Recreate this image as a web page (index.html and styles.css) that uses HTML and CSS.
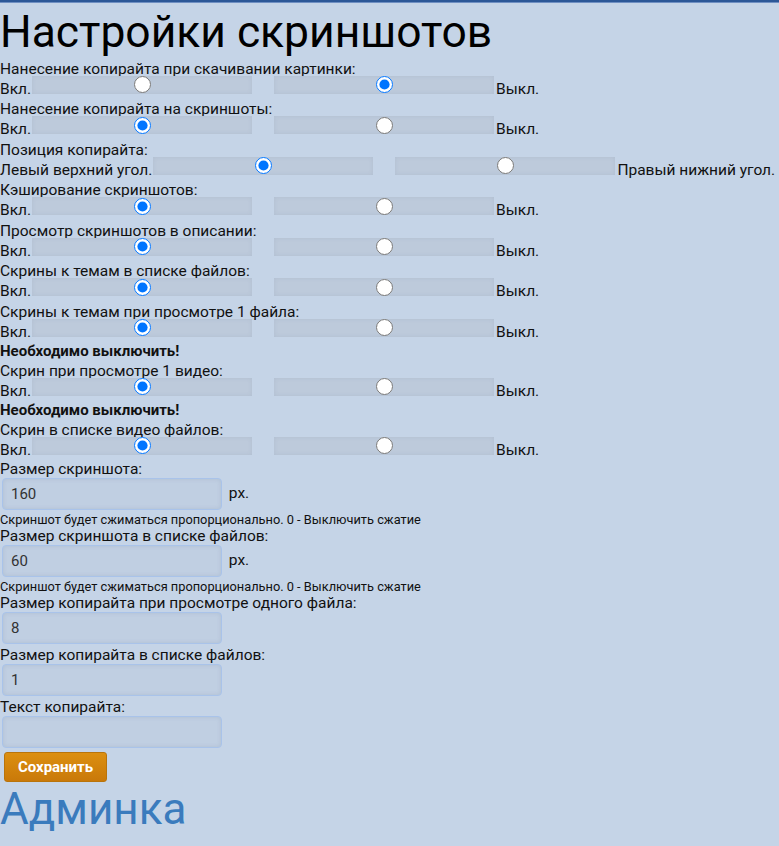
FILE: index.html
```html
<!DOCTYPE html>
<html lang="ru">
  <head>
    <meta charset="UTF-8" />
    <title>Настройки скриншотов</title>
    <link rel="stylesheet" href="styles.css">
  </head>
  <body>
    <div class="topbar"></div>
    <h1 class="page-title">Настройки скриншотов</h1>
    <form class="settings" action="" method="POST">
      <div class="field-label">Нанесение копирайта при скачивании картинки:</div>
      <div class="switch-row">
        <span class="side-label">Вкл.</span>
        <label class="radio-box"><input type="radio" name="copy_download" value="1" /></label>
        <label class="radio-box"><input type="radio" name="copy_download" value="0" checked /></label>
        <span class="side-label">Выкл.</span>
      </div>

      <div class="field-label">Нанесение копирайта на скриншоты:</div>
      <div class="switch-row">
        <span class="side-label">Вкл.</span>
        <label class="radio-box"><input type="radio" name="copy_screens" value="1" checked /></label>
        <label class="radio-box"><input type="radio" name="copy_screens" value="0" /></label>
        <span class="side-label">Выкл.</span>
      </div>

      <div class="field-label">Позиция копирайта:</div>
      <div class="switch-row">
        <span class="side-label">Левый верхний угол.</span>
        <label class="radio-box"><input type="radio" name="copy_position" value="0" checked /></label>
        <label class="radio-box"><input type="radio" name="copy_position" value="1" /></label>
        <span class="side-label">Правый нижний угол.</span>
      </div>

      <div class="field-label">Кэширование скриншотов:</div>
      <div class="switch-row">
        <span class="side-label">Вкл.</span>
        <label class="radio-box"><input type="radio" name="cache" value="1" checked /></label>
        <label class="radio-box"><input type="radio" name="cache" value="0" /></label>
        <span class="side-label">Выкл.</span>
      </div>

      <div class="field-label">Просмотр скриншотов в описании:</div>
      <div class="switch-row">
        <span class="side-label">Вкл.</span>
        <label class="radio-box"><input type="radio" name="in_desc" value="1" checked /></label>
        <label class="radio-box"><input type="radio" name="in_desc" value="0" /></label>
        <span class="side-label">Выкл.</span>
      </div>

      <div class="field-label">Скрины к темам в списке файлов:</div>
      <div class="switch-row">
        <span class="side-label">Вкл.</span>
        <label class="radio-box"><input type="radio" name="theme_list" value="1" checked /></label>
        <label class="radio-box"><input type="radio" name="theme_list" value="0" /></label>
        <span class="side-label">Выкл.</span>
      </div>

      <div class="field-label">Скрины к темам при просмотре 1 файла:</div>
      <div class="switch-row">
        <span class="side-label">Вкл.</span>
        <label class="radio-box"><input type="radio" name="theme_file" value="1" checked /></label>
        <label class="radio-box"><input type="radio" name="theme_file" value="0" /></label>
        <span class="side-label">Выкл.</span>
      </div>

      <div class="warning">Необходимо выключить!</div>
      <div class="field-label">Скрин при просмотре 1 видео:</div>
      <div class="switch-row">
        <span class="side-label">Вкл.</span>
        <label class="radio-box"><input type="radio" name="video_file" value="1" checked /></label>
        <label class="radio-box"><input type="radio" name="video_file" value="0" /></label>
        <span class="side-label">Выкл.</span>
      </div>

      <div class="warning">Необходимо выключить!</div>
      <div class="field-label">Скрин в списке видео файлов:</div>
      <div class="switch-row">
        <span class="side-label">Вкл.</span>
        <label class="radio-box"><input type="radio" name="video_list" value="1" checked /></label>
        <label class="radio-box"><input type="radio" name="video_list" value="0" /></label>
        <span class="side-label">Выкл.</span>
      </div>

      <div class="text-label">Размер скриншота:</div>
      <div class="text-row">
        <input type="text" class="text-input" name="size" value="160" /> px.
      </div>
      <div class="note">Скриншот будет сжиматься пропорционально. 0 - Выключить сжатие</div>

      <div class="text-label">Размер скриншота в списке файлов:</div>
      <div class="text-row">
        <input type="text" class="text-input" name="size_list" value="60" /> px.
      </div>
      <div class="note">Скриншот будет сжиматься пропорционально. 0 - Выключить сжатие</div>

      <div class="text-label">Размер копирайта при просмотре одного файла:</div>
      <div class="text-row">
        <input type="text" class="text-input" name="copy_size" value="8" />
      </div>

      <div class="text-label">Размер копирайта в списке файлов:</div>
      <div class="text-row">
        <input type="text" class="text-input" name="copy_size_list" value="1" />
      </div>

      <div class="text-label">Текст копирайта:</div>
      <div class="text-row">
        <input type="text" class="text-input" name="copy_text" value="" />
      </div>

      <button type="submit" class="save-button">Сохранить</button>
    </form>
    <a class="admin-link" href="#">Админка</a>
  </body>
</html>
```

FILE: styles.css
```css
body {
  margin: 0;
  background-color: #c5d4e7;
  font-family: Roboto, "Liberation Sans", sans-serif;
  font-size: 15.5px;
  color: #111;
}

.topbar {
  height: 2px;
  background-color: #2c5797;
  border-bottom: 1px solid #6f8fc2;
}

.page-title {
  margin: 3px 0 0 0;
  font-size: 44.4px;
  font-weight: normal;
  line-height: 52.7px;
  color: #000;
}

.field-label {
  line-height: 20px;
}

.switch-row {
  display: flex;
  align-items: flex-start;
  height: 20.5px;
}

.side-label {
  line-height: 20px;
  white-space: nowrap;
}

.radio-box {
  display: flex;
  align-items: center;
  justify-content: center;
  width: 220px;
  height: 18px;
  margin: -3px 0 0 1px;
  background-color: #bdcadb;
  box-shadow: inset 0 0 4px rgba(90, 110, 140, 0.12);
}

.radio-box + .radio-box {
  margin-left: 22px;
  margin-right: 2px;
}

.radio-box input {
  width: 17px;
  height: 17px;
  margin: 0;
}

.warning {
  font-weight: bold;
  font-size: 15px;
  line-height: 18.5px;
}

.text-label {
  line-height: 18px;
}

.text-row {
  height: 34px;
}

.text-input {
  box-sizing: border-box;
  width: 220px;
  height: 32px;
  margin: 0 3px 0 2px;
  padding: 0 8px;
  border: 1px solid #a9c3ea;
  border-radius: 4px;
  background-color: #c0cfe2;
  box-shadow: inset 0 0 4px rgba(80, 100, 130, 0.15);
  font-family: Roboto, "Liberation Sans", sans-serif;
  font-size: 15px;
  color: #333;
  vertical-align: middle;
}

.note {
  font-size: 12.8px;
  line-height: 15px;
}

.save-button {
  display: block;
  margin: 2px 0 0 4px;
  width: 103px;
  height: 30px;
  border: 1px solid #b9740b;
  border-radius: 3px;
  background: linear-gradient(#dc8f10, #c97909);
  color: #fff;
  font-family: Roboto, "Liberation Sans", sans-serif;
  font-size: 15px;
  font-weight: bold;
  cursor: pointer;
}

.admin-link {
  display: block;
  margin-top: 3px;
  font-size: 44px;
  line-height: 49px;
  color: #3a7bbd;
  text-decoration: none;
}
```
